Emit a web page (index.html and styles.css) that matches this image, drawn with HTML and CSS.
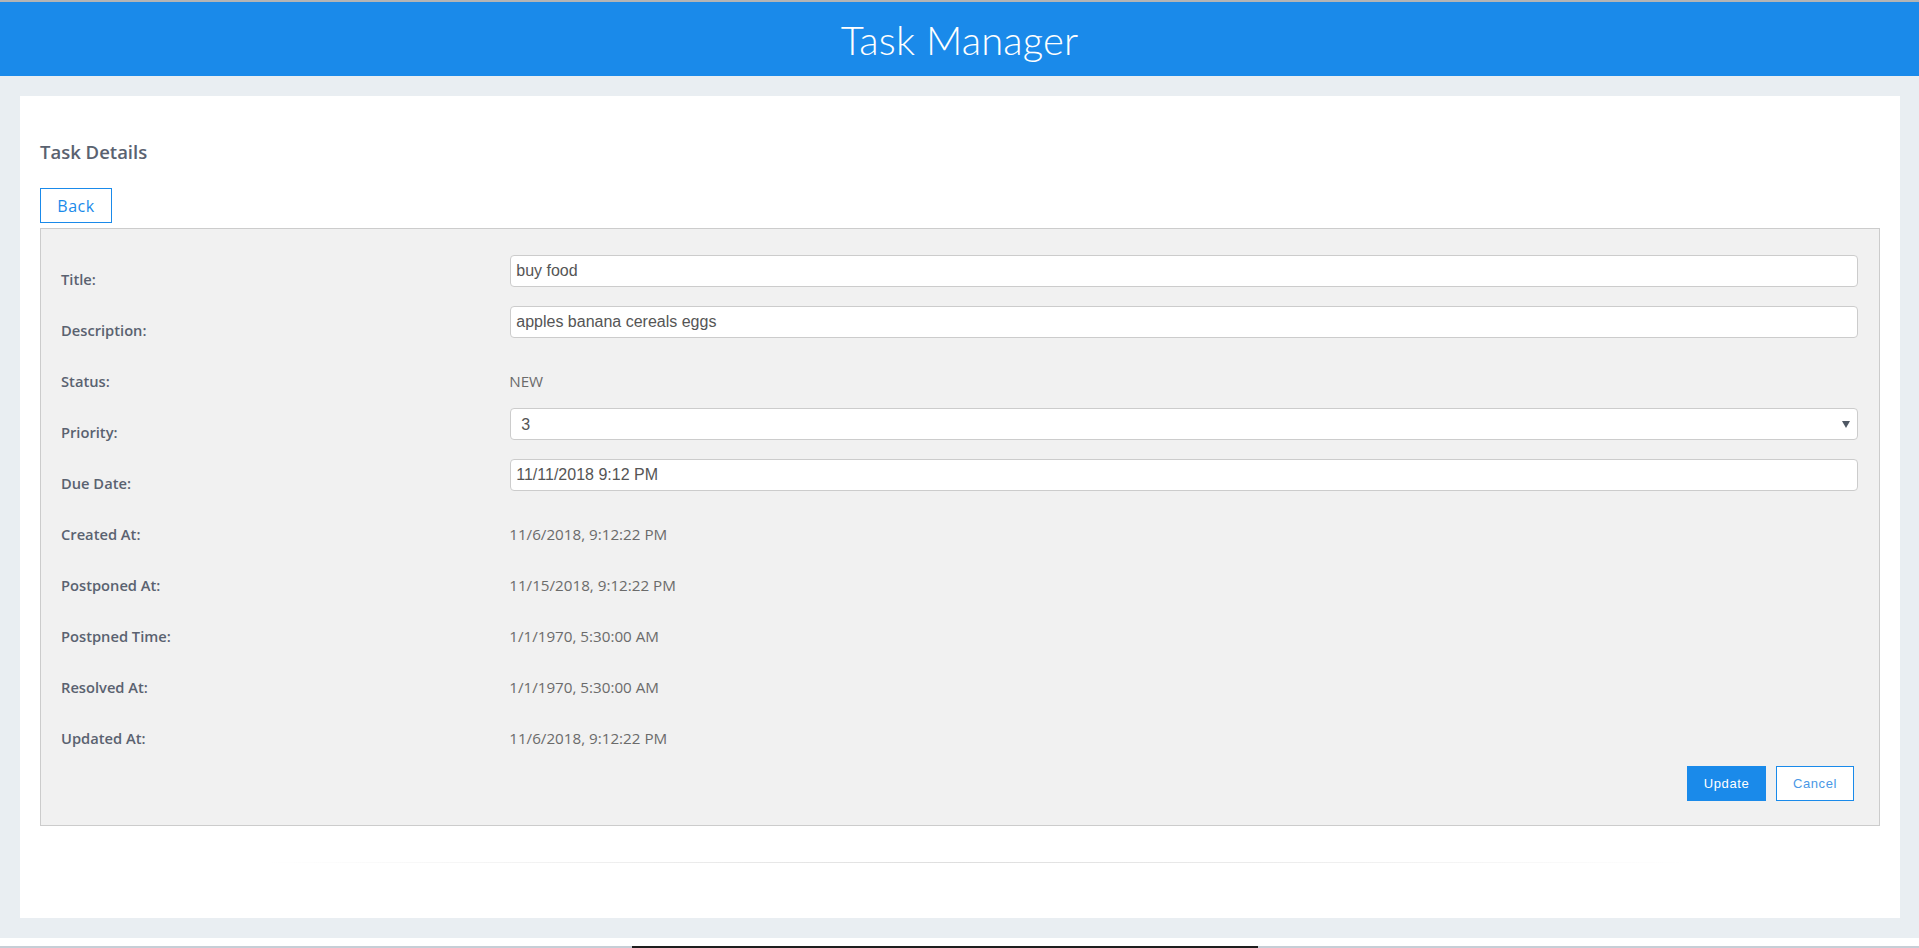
FILE: index.html
```html
<!DOCTYPE html>
<html lang="en">
<head>
<meta charset="utf-8">
<title>Task Manager</title>
<link rel="stylesheet" href="styles.css">
</head>
<body>
<div class="topline"></div>
<header class="app-header">
  <h1 class="app-title">Task Manager</h1>
</header>
<main class="page">
  <section class="card">
    <h3 class="card-title">Task Details</h3>
    <button class="btn btn-back" type="button">Back</button>
    <form class="panel">
      <div class="row">
        <label class="row-label">Title:</label>
        <div class="row-field"><input class="control" type="text" value="buy food"></div>
      </div>
      <div class="row">
        <label class="row-label">Description:</label>
        <div class="row-field"><input class="control" type="text" value="apples banana cereals eggs"></div>
      </div>
      <div class="row">
        <label class="row-label">Status:</label>
        <div class="row-value">NEW</div>
      </div>
      <div class="row">
        <label class="row-label">Priority:</label>
        <div class="row-field select-wrap">
          <select class="control control-select">
            <option>1</option>
            <option>2</option>
            <option selected>3</option>
            <option>4</option>
            <option>5</option>
          </select>
        </div>
      </div>
      <div class="row">
        <label class="row-label">Due Date:</label>
        <div class="row-field"><input class="control" type="text" value="11/11/2018 9:12 PM"></div>
      </div>
      <div class="row">
        <label class="row-label">Created At:</label>
        <div class="row-value">11/6/2018, 9:12:22 PM</div>
      </div>
      <div class="row">
        <label class="row-label">Postponed At:</label>
        <div class="row-value">11/15/2018, 9:12:22 PM</div>
      </div>
      <div class="row">
        <label class="row-label">Postpned Time:</label>
        <div class="row-value">1/1/1970, 5:30:00 AM</div>
      </div>
      <div class="row">
        <label class="row-label">Resolved At:</label>
        <div class="row-value">1/1/1970, 5:30:00 AM</div>
      </div>
      <div class="row">
        <label class="row-label">Updated At:</label>
        <div class="row-value">11/6/2018, 9:12:22 PM</div>
      </div>
      <div class="actions">
        <button class="btn btn-primary" type="button">Update</button>
        <button class="btn btn-outline" type="button">Cancel</button>
      </div>
    </form>
    <hr class="divider">
  </section>
</main>
<div class="bottom-strip">
  <div class="bar bar-side"></div>
  <div class="bar bar-mid"></div>
  <div class="bar bar-side bar-grow"></div>
</div>
</body>
</html>
```

FILE: styles.css
```css
* { box-sizing: border-box; }

html, body {
  margin: 0;
  padding: 0;
}

body {
  width: 1919px;
  height: 948px;
  overflow: hidden;
  background: #ffffff;
  font-family: "Open Sans", "Liberation Sans", sans-serif;
  display: flex;
  flex-direction: column;
}

.topline {
  height: 2px;
  background: #b4b4b4;
  flex: none;
}

.app-header {
  height: 74px;
  background: #1a8aea;
  flex: none;
  display: flex;
  justify-content: center;
  align-items: flex-start;
}

.app-title {
  margin: 0;
  padding-top: 14px;
  font-family: Lato, "Open Sans", sans-serif;
  font-weight: 300;
  font-size: 40px;
  line-height: 48px;
  color: #ffffff;
  letter-spacing: 0.1px;
}

.page {
  flex: none;
  height: 862px;
  background: #e9eef2;
  padding: 20px 19px 20px 20px;
}

.card {
  background: #ffffff;
  height: 822px;
  padding: 44px 20px 0 20px;
}

.card-title {
  margin: 0;
  font-size: 18.5px;
  line-height: 24px;
  font-weight: 600;
  color: #5a6270;
}

.btn {
  font-family: "Open Sans", "Liberation Sans", sans-serif;
  cursor: pointer;
  border-radius: 0;
  outline: none;
}

.btn-back {
  margin-top: 24px;
  width: 72px;
  height: 35px;
  padding: 0;
  background: #ffffff;
  border: 1px solid #1a8aea;
  color: #1a8aea;
  font-size: 16px;
  letter-spacing: 0.5px;
  display: block;
}

.panel {
  margin: 5px 0 0 0;
  background: #f1f1f1;
  border: 1px solid #cccccc;
  padding: 26px 21px 24px 20px;
}

.row {
  display: grid;
  grid-template-columns: 1fr 3fr;
  height: 51px;
}

.row-label {
  padding-top: 14px;
  line-height: 21px;
  font-size: 14.7px;
  font-weight: 600;
  color: #5a6270;
}

.row-value {
  padding-top: 14px;
  line-height: 21px;
  font-size: 15.2px;
  color: #6b6b6b;
  margin-left: -1px;
}

.row-field {
  position: relative;
}

.control {
  width: 100%;
  height: 32px;
  border: 1px solid #cccccc;
  border-radius: 4px;
  background: #ffffff;
  padding: 0 5px;
  font-family: "Liberation Sans", Arial, sans-serif;
  font-size: 16px;
  color: #555555;
  outline: none;
  display: block;
}

.control-select {
  appearance: none;
  -webkit-appearance: none;
  padding-left: 10px;
}

.select-wrap::after {
  content: "";
  position: absolute;
  right: 8px;
  top: 13px;
  width: 0;
  height: 0;
  border-left: 4px solid transparent;
  border-right: 4px solid transparent;
  border-top: 7px solid #4f5864;
  pointer-events: none;
}

.actions {
  display: flex;
  justify-content: flex-end;
  gap: 10px;
  margin-top: 1px;
  padding-right: 4px;
}

.btn-primary {
  width: 79px;
  height: 35px;
  padding: 0;
  background: #1a8aea;
  border: 1px solid #1a8aea;
  color: #ffffff;
  font-family: "Liberation Sans", Arial, sans-serif;
  font-size: 13px;
  letter-spacing: 0.6px;
}

.btn-outline {
  width: 78px;
  height: 35px;
  padding: 0;
  background: #ffffff;
  border: 1px solid #1a8aea;
  color: #4a98e6;
  font-family: "Liberation Sans", Arial, sans-serif;
  font-size: 13px;
  letter-spacing: 0.6px;
}

.divider {
  margin: 36px 0 0 0;
  height: 1px;
  border: 0;
  background: linear-gradient(to right, rgba(0,0,0,0) 12%, rgba(0,0,0,0.13) 50%, rgba(0,0,0,0) 90%);
}

.bottom-strip {
  flex: none;
  height: 10px;
  background: #ffffff;
  display: flex;
  align-items: flex-end;
}

.bar {
  height: 2px;
}

.bar-side {
  width: 632px;
  background: #c6ced6;
}

.bar-grow {
  flex: 1;
  width: auto;
}

.bar-mid {
  width: 626px;
  background: #1e1e1e;
}
```
